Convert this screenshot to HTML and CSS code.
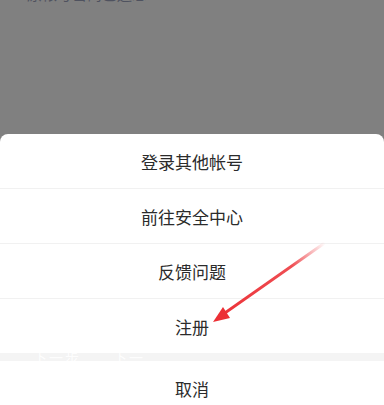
FILE: index.html
```html
<!DOCTYPE html>
<html lang="zh">
<head>
<meta charset="utf-8">
<link rel="stylesheet" href="styles.css">
</head>
<body>
<div class="screen">
  <div class="backdrop">
    <p class="hint">原帐号密码已遗忘</p>
  </div>
  <div class="sheet">
    <div class="item">登录其他帐号</div>
    <div class="item">前往安全中心</div>
    <div class="item">反馈问题</div>
    <div class="item">注册</div>
    <div class="gap"><span class="ghost">下一步　　下一</span></div>
    <div class="item cancel">取消</div>
  </div>
  <svg class="arrow" width="384" height="405" viewBox="0 0 384 405">
    <defs>
      <linearGradient id="g" x1="325" y1="243" x2="215" y2="320" gradientUnits="userSpaceOnUse">
        <stop offset="0" stop-color="#ec2f35" stop-opacity="0"/>
        <stop offset="0.3" stop-color="#ec2f35" stop-opacity="0.85"/>
        <stop offset="1" stop-color="#ec2f35"/>
      </linearGradient>
    </defs>
    <line x1="326" y1="242" x2="222" y2="315" stroke="url(#g)" stroke-width="2.8" stroke-linecap="round"/>
    <polygon points="213,322 223,307 230,318" fill="#ec2f35"/>
  </svg>
</div>
</body>
</html>
```
FILE: styles.css
```css
html, body {
  margin: 0;
  padding: 0;
}
body {
  font-family: "Noto Sans CJK SC", "Noto Sans", sans-serif;
  background: #808080;
}
.screen {
  position: relative;
  width: 384px;
  height: 405px;
  display: flex;
  flex-direction: column;
  overflow: hidden;
  background: #808080;
}
.backdrop {
  height: 134px;
  flex: none;
  background: #808080;
}
.hint {
  margin: -15px 0 0 27px;
  font-size: 15px;
  line-height: 18px;
  color: #3b3f52;
  opacity: 0.7;
}
.sheet {
  flex: 1;
  background: #fff;
  border-radius: 8px 8px 0 0;
  display: flex;
  flex-direction: column;
}
.item {
  height: 55px;
  flex: none;
  display: flex;
  align-items: center;
  justify-content: center;
  font-size: 17px;
  color: #2b2b2b;
  border-bottom: 1px solid #f1f1f1;
  box-sizing: border-box;
}
.item:nth-child(4) {
  border-bottom: none;
  height: 54px;
}
.gap {
  height: 8px;
  flex: none;
  background: #f4f4f4;
  overflow: hidden;
  padding-left: 33px;
}
.ghost {
  display: block;
  font-size: 14px;
  line-height: 8px;
  color: #fff;
  letter-spacing: 2px;
  opacity: 0.9;
}
.cancel {
  border-bottom: none;
}
.arrow {
  position: absolute;
  left: 0;
  top: 0;
  pointer-events: none;
}
```
